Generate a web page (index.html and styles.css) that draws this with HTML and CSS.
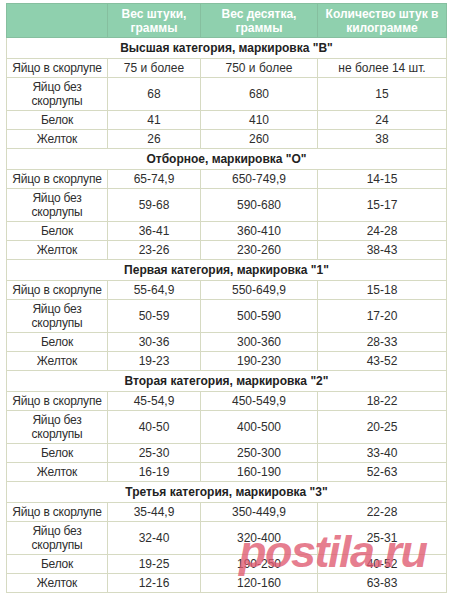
FILE: index.html
```html
<!DOCTYPE html>
<html lang="ru">
<head>
<meta charset="utf-8">
<title>Категории яиц</title>
<link rel="stylesheet" href="styles.css">
</head>
<body>
<div class="wrap">
<table class="eggs">
<colgroup>
<col class="c1"><col class="c2"><col class="c3"><col class="c4">
</colgroup>
<thead>
<tr><th></th><th>Вес штуки,<br>граммы</th><th>Вес десятка,<br>граммы</th><th>Количество штук в<br>килограмме</th></tr>
</thead>
<tbody>
<tr class="cat"><td colspan="4">Высшая категория, маркировка "В"</td></tr>
<tr><td class="name">Яйцо в скорлупе</td><td>75 и более</td><td>750 и более</td><td>не более 14 шт.</td></tr>
<tr><td class="name">Яйцо без<br>скорлупы</td><td>68</td><td>680</td><td>15</td></tr>
<tr><td class="name">Белок</td><td>41</td><td>410</td><td>24</td></tr>
<tr><td class="name">Желток</td><td>26</td><td>260</td><td>38</td></tr>

<tr class="cat"><td colspan="4">Отборное, маркировка "О"</td></tr>
<tr><td class="name">Яйцо в скорлупе</td><td>65-74,9</td><td>650-749,9</td><td>14-15</td></tr>
<tr><td class="name">Яйцо без<br>скорлупы</td><td>59-68</td><td>590-680</td><td>15-17</td></tr>
<tr><td class="name">Белок</td><td>36-41</td><td>360-410</td><td>24-28</td></tr>
<tr><td class="name">Желток</td><td>23-26</td><td>230-260</td><td>38-43</td></tr>

<tr class="cat"><td colspan="4">Первая категория, маркировка "1"</td></tr>
<tr><td class="name">Яйцо в скорлупе</td><td>55-64,9</td><td>550-649,9</td><td>15-18</td></tr>
<tr><td class="name">Яйцо без<br>скорлупы</td><td>50-59</td><td>500-590</td><td>17-20</td></tr>
<tr><td class="name">Белок</td><td>30-36</td><td>300-360</td><td>28-33</td></tr>
<tr><td class="name">Желток</td><td>19-23</td><td>190-230</td><td>43-52</td></tr>

<tr class="cat"><td colspan="4">Вторая категория, маркировка "2"</td></tr>
<tr><td class="name">Яйцо в скорлупе</td><td>45-54,9</td><td>450-549,9</td><td>18-22</td></tr>
<tr><td class="name">Яйцо без<br>скорлупы</td><td>40-50</td><td>400-500</td><td>20-25</td></tr>
<tr><td class="name">Белок</td><td>25-30</td><td>250-300</td><td>33-40</td></tr>
<tr><td class="name">Желток</td><td>16-19</td><td>160-190</td><td>52-63</td></tr>

<tr class="cat"><td colspan="4">Третья категория, маркировка "3"</td></tr>
<tr><td class="name">Яйцо в скорлупе</td><td>35-44,9</td><td>350-449,9</td><td>22-28</td></tr>
<tr><td class="name">Яйцо без<br>скорлупы</td><td>32-40</td><td>320-400</td><td>25-31</td></tr>
<tr><td class="name">Белок</td><td>19-25</td><td>190-250</td><td>40-52</td></tr>
<tr><td class="name">Желток</td><td>12-16</td><td>120-160</td><td>63-83</td></tr>
</tbody>
</table>
<div class="watermark">postila.ru</div>
</div>
</body>
</html>
```

FILE: styles.css
```css
html, body {
  margin: 0;
  padding: 0;
  background: #ffffff;
}

.wrap {
  position: relative;
  padding: 3px 0 0 6px;
  font-family: "Liberation Sans", Arial, sans-serif;
}

.eggs {
  border-collapse: collapse;
  table-layout: fixed;
  width: 440px;
  font-size: 12px;
  line-height: 14px;
  color: #2e2e2e;
  border: 1px solid #cfd3b4;
}

.c1 { width: 101px; }
.c2 { width: 93px; }
.c3 { width: 117px; }
.c4 { width: 129px; }

.eggs th {
  background: #8fd0ae;
  color: #ffffff;
  font-weight: bold;
  padding: 3px 2px 2px;
  border: 1px solid #86bf9f;
  text-align: center;
  vertical-align: middle;
  white-space: nowrap;
}

.eggs td {
  padding: 2px 2px;
  border: 1px solid #d6dac2;
  text-align: center;
  vertical-align: middle;
  white-space: nowrap;
}

.eggs td.name {
  letter-spacing: -0.2px;
}

.eggs .cat td {
  font-weight: bold;
  padding: 3px 2px;
  color: #222222;
}

.watermark {
  position: absolute;
  left: 239px;
  top: 522px;
  font-family: "Liberation Sans", Arial, sans-serif;
  font-size: 45px;
  font-weight: bold;
  font-style: italic;
  letter-spacing: -1.5px;
  line-height: 60px;
  color: rgba(224, 90, 112, 0.78);
  pointer-events: none;
}
```
